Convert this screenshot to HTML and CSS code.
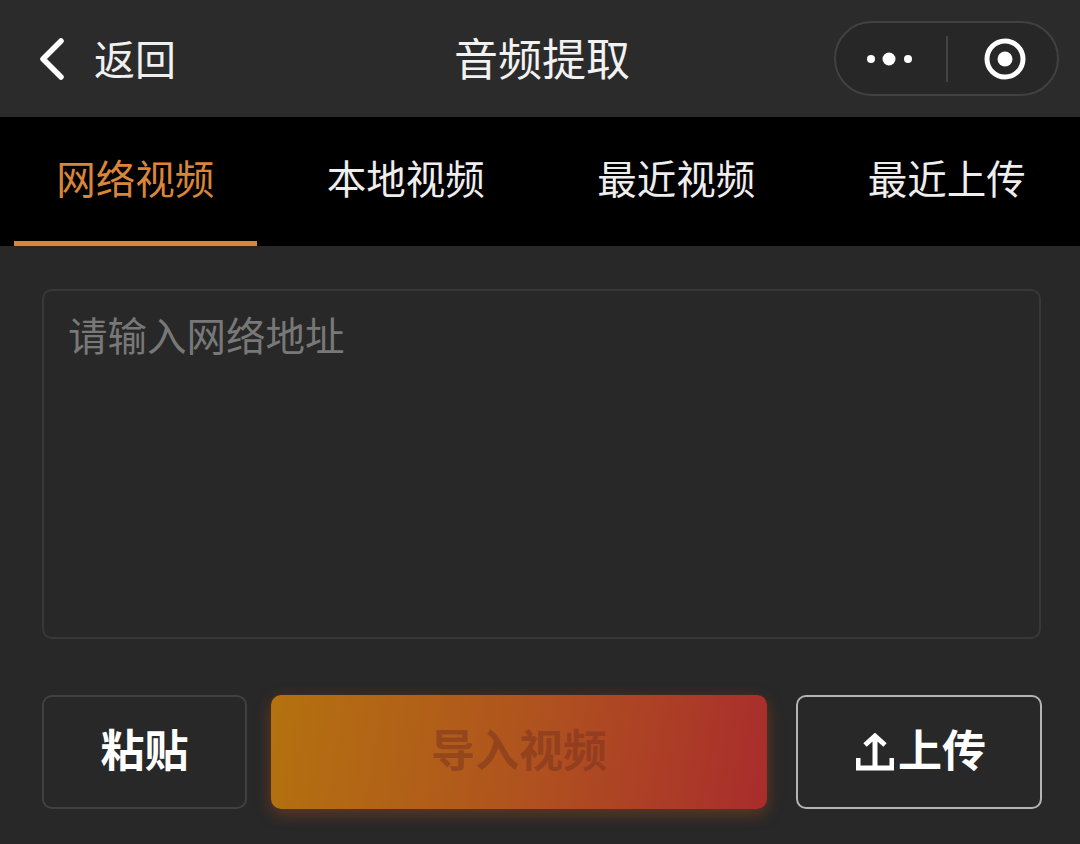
FILE: index.html
```html
<!DOCTYPE html>
<html lang="zh-CN">
<head>
  <meta charset="UTF-8" />
  <meta name="viewport" content="width=device-width, initial-scale=1.0" />
  <title>音频提取</title>
  <link rel="stylesheet" href="styles.css">
</head>
<body>
  <header class="nav">
    <div class="nav-back">
      <svg class="back-icon" width="26" height="42" viewBox="0 0 26 42">
        <path d="M22 3 L4 21 L22 39" fill="none" stroke="#fff" stroke-width="5.5" stroke-linecap="round" stroke-linejoin="round" />
      </svg>
      <span>返回</span>
    </div>
    <div class="nav-title">音频提取</div>
    <div class="capsule">
      <div class="capsule-part dots">
        <svg width="46" height="14" viewBox="0 0 46 14">
          <circle cx="4" cy="7" r="4" fill="#fff" />
          <circle cx="22" cy="7" r="6.5" fill="#fff" />
          <circle cx="41" cy="7" r="4" fill="#fff" />
        </svg>
      </div>
      <div class="capsule-line"></div>
      <div class="capsule-part target">
        <svg width="42" height="42" viewBox="0 0 42 42">
          <circle cx="21" cy="21" r="18" fill="none" stroke="#fff" stroke-width="5" />
          <circle cx="21" cy="21" r="7.5" fill="#fff" />
        </svg>
      </div>
    </div>
  </header>

  <nav class="tabs">
    <div class="tab active">网络视频</div>
    <div class="tab">本地视频</div>
    <div class="tab">最近视频</div>
    <div class="tab">最近上传</div>
  </nav>

  <main class="content">
    <div class="url-box">请输入网络地址</div>
    <div class="actions">
      <div class="btn btn-paste">粘贴</div>
      <div class="btn btn-import">导入视频</div>
      <div class="btn btn-upload">
        <svg width="38" height="38" viewBox="0 0 38 38">
          <path d="M9 12 L19 3 L29 12 M19 3 V35 M2 25 V35 H36 V25" fill="none" stroke="#fff" stroke-width="5" stroke-linejoin="miter" />
        </svg>
        <span>上传</span>
      </div>
    </div>
  </main>
</body>
</html>
```

FILE: styles.css
```css
* {
  box-sizing: border-box;
}
html, body {
  margin: 0;
  height: 100%;
}
body {
  font-family: "Noto Sans CJK SC", "Liberation Sans", sans-serif;
  background: #282828;
  color: #fff;
  overflow: hidden;
}
.nav {
  height: 117px;
  background: #2b2b2b;
  display: grid;
  grid-template-columns: 415px auto 1fr;
  align-items: center;
  padding: 0 21px 0 39px;
}
.nav-back {
  display: flex;
  align-items: center;
  gap: 29px;
  font-size: 41px;
  color: #f0f0f0;
}
.nav-back span {
  line-height: 1;
  margin-bottom: 2px;
}
.nav-title {
  font-size: 44px;
  line-height: 1;
  color: #f2f2f2;
  margin-bottom: 3px;
}
.capsule {
  justify-self: end;
  width: 225px;
  height: 75px;
  border: 2px solid #414141;
  border-radius: 38px;
  background: #272727;
  display: flex;
  align-items: center;
}
.capsule-part {
  display: flex;
  align-items: center;
}
.capsule-part.dots {
  width: 110px;
  padding-left: 31px;
}
.capsule-part.target {
  padding-left: 36px;
}
.capsule-line {
  width: 2px;
  height: 46px;
  background: #444;
}
.tabs {
  height: 129px;
  background: #000;
  display: grid;
  grid-template-columns: repeat(4, 270.5px);
  overflow: hidden;
}
.tab {
  font-size: 39.5px;
  line-height: 1;
  color: #eee;
  display: flex;
  justify-content: center;
  align-items: center;
  padding-bottom: 9px;
  position: relative;
}
.tab.active {
  color: #d9853a;
}
.tab.active::after {
  content: "";
  position: absolute;
  left: 14px;
  right: 13.5px;
  bottom: 0;
  height: 5px;
  background: #d9853a;
}
.content {
  padding: 43px 38px 0 42px;
}
.url-box {
  height: 350px;
  margin-right: 1px;
  border: 2px solid #383838;
  border-radius: 10px;
  padding: 20px 24px;
  font-size: 39.5px;
  line-height: 46px;
  color: #787878;
}
.actions {
  display: flex;
  margin-top: 56px;
}
.btn {
  height: 114px;
  border-radius: 10px;
  font-size: 44px;
  font-weight: 700;
  line-height: 1;
  padding-bottom: 8px;
  display: flex;
  justify-content: center;
  align-items: center;
}
.btn-paste {
  width: 205px;
  border: 2px solid #414141;
}
.btn-import {
  width: 496px;
  margin-left: 24px;
  background: linear-gradient(100deg, #b4720f 0%, #b0541e 50%, #a92c2c 100%);
  box-shadow: 0 5px 16px rgba(190, 80, 20, 0.4);
  color: rgba(120, 50, 30, 0.5);
}
.btn-upload {
  width: 246px;
  margin-left: 29px;
  padding-left: 4px;
  border: 2px solid #b4b4b4;
  gap: 4px;
}
.btn-upload svg {
  margin-top: 8px;
}
```
